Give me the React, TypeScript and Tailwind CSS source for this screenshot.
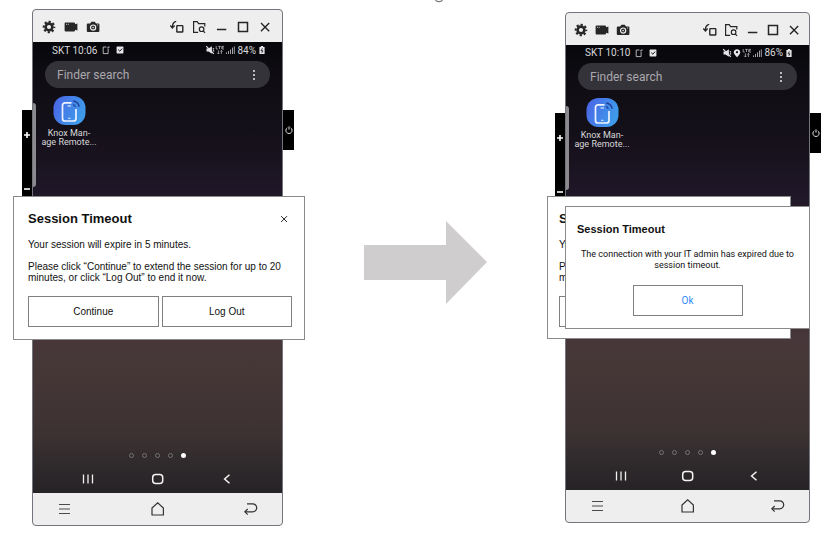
import type { ReactNode } from "react";

type IconProps = { className?: string };

const box = "h-3.5 w-3.5 shrink-0";

const GearIcon = () => (
  <svg viewBox="0 0 14 14" className={box} fill="none" stroke="#262626">
    <circle cx="7" cy="7" r="3.4" strokeWidth="2.6" />
    <circle cx="7" cy="7" r="5.3" strokeWidth="2" strokeDasharray="2.2 1.963" strokeDashoffset="1.1" />
  </svg>
);

const VideoIcon = () => (
  <svg viewBox="0 0 14 14" className={box} fill="#262626">
    <path d="M1.6 2.4h8.400a1 1 0 0 1 1 1v.8l2.400-.6v6.800L11 9.800v.8a1 1 0 0 1-1 1H1.600a1 1 0 0 1-1-1V3.400a1 1 0 0 1 1-1z" />
    <path d="M2 4.300h1M3.800 4.300h1" stroke="#eee" strokeWidth="0.800" />
  </svg>
);

const CameraIcon = () => (
  <svg viewBox="0 0 14 14" className={box}>
    <path d="M1.8 3.4h2.4l1.2-1.7h3.4L10 3.4h2.4a1 1 0 0 1 1 1v6.7a1 1 0 0 1-1 1H1.8a1 1 0 0 1-1-1V4.4a1 1 0 0 1 1-1z" fill="#262626" />
    <circle cx="7.1" cy="7.6" r="2.6" fill="#262626" stroke="#eee" strokeWidth="1.2" />
    <circle cx="7.1" cy="7.6" r="0.8" fill="#eee" />
    <path d="M11 5h1.2" stroke="#eee" strokeWidth="0.8" />
  </svg>
);

const RotateIcon = () => (
  <svg viewBox="0 0 14 14" className={box} fill="none" stroke="#262626" strokeWidth="1.4">
    <rect x="6.8" y="5.6" width="6" height="6.4" rx="0.6" />
    <path d="M6.2 1.4C3.8 2 2.4 3.6 2.4 7" />
    <path d="M0.3 5.4l2.1 2.5 2.2-2.3" />
  </svg>
);

const FolderSearchIcon = () => (
  <svg viewBox="0 0 14 14" className={box} fill="none" stroke="#262626" strokeWidth="1.2">
    <path d="M6.2 12.4H1.6V1.6h3.6l1.4 2h6.2v3" />
    <circle cx="9.6" cy="9.2" r="2.3" />
    <path d="M11.2 10.9l1.8 2" />
  </svg>
);

const MinimizeIcon = () => (
  <svg viewBox="0 0 14 14" className={box} stroke="#262626">
    <path d="M2.900 9.5h9.400" strokeWidth="1.3" />
  </svg>
);

const MaximizeIcon = () => (
  <svg viewBox="0 0 14 14" className={box} fill="none" stroke="#262626">
    <rect x="2.5" y="2.5" width="9" height="9" strokeWidth="1.5" />
  </svg>
);

const CloseIcon = ({ className = box }: IconProps) => (
  <svg viewBox="0 0 14 14" className={className} fill="none" stroke="#262626" strokeWidth="1.4">
    <path d="M3 3l8.2 8.2M11.2 3L3 11.2" />
  </svg>
);

const statusBox = "h-2.5 w-2.5 shrink-0";

const NoteIcon = () => (
  <svg viewBox="0 0 10 10" className={statusBox} fill="none" stroke="#c4c4c6" strokeWidth="0.9">
    <path d="M5.4 2H2.2v6.6h4.9V4" />
    <path d="M6 2.9h1.9V1.2" />
  </svg>
);

const CheckIcon = () => (
  <svg viewBox="0 0 10 10" className={statusBox}>
    <rect x="1.6" y="1.6" width="6.8" height="6.8" rx="0.6" fill="#e6e6e8" />
    <path d="M3.2 4.6l1.6 1.6 2.4-2.6" fill="none" stroke="#111" strokeWidth="1" />
  </svg>
);

const MuteIcon = () => (
  <svg viewBox="0 0 10 10" className={statusBox}>
    <path d="M1.500 3.600h2L6.900 1.200v7.600L3.500 6.600h-2z" fill="#e4e4e6" />
    <path d="M1.2 1.2l7.600 7.600M7.8 3.400l1.200.8M7.8 5.800h1.400" stroke="#e4e4e6" strokeWidth="1.200" />
  </svg>
);

const PinIcon = () => (
  <svg viewBox="0 0 10 10" className={statusBox}>
    <path d="M5 1.2c2 0 3.2 1.4 3.2 3S6.600 7.600 5 9.200C3.400 7.600 1.800 5.800 1.800 4.200S3 1.200 5 1.200z" fill="#e6e6e8" />
    <circle cx="5" cy="4.200" r="1.100" fill="#111" />
  </svg>
);

const LteIcon = () => (
  <svg viewBox="0 0 10 10" className={statusBox} fill="none" stroke="#b4b4b6" strokeWidth="0.8">
    <path d="M1.2 1v3h1.600M3.200 1.400h2.600M4.500 1.400V4M9 1.400H6.800V4H9M6.800 2.700h1.800" />
    <path d="M3.400 9V5.400M2.300 7.800L3.400 9l1.100-1.200M6.400 9V5.400M5.300 6.600l1.100-1.200 1.100 1.200" />
  </svg>
);

const SignalIcon = () => (
  <svg viewBox="0 0 10 10" className={statusBox} stroke="#a2a2a6" strokeWidth="1">
    <path d="M1.5 9V7.400M3.500 9V6M5.500 9V4.400M7.500 9V2.600M9.300 9V1.400" />
  </svg>
);

const BatteryIcon = () => (
  <svg viewBox="0 0 8 10" className="h-2.5 w-2 shrink-0">
    <path d="M2.800 1h2.400v1H6.600v7H1.400V2h1.400z" fill="#e6e6e8" />
    <path d="M4.400 3.400L3 5.800h2L3.800 7.800" fill="none" stroke="#222" strokeWidth="0.9" />
  </svg>
);

const AppIcon = () => (
  <svg viewBox="0 0 33 29" className="h-[29px] w-[33px]">
    <defs>
      <linearGradient id="tile" x1="0" y1="0" x2="1" y2="0.400">
        <stop offset="0" stopColor="#4a62e6" />
        <stop offset="1" stopColor="#3f9bea" />
      </linearGradient>
    </defs>
    <rect x="0.5" y="0" width="32" height="29" rx="12" fill="url(#tile)" />
    <path d="M18.500 6.800h-6.500a2.500 2.500 0 0 0-2.500 2.500v13.200a2.500 2.500 0 0 0 2.500 2.500h8.500a2.500 2.500 0 0 0 2.500-2.500V13" fill="none" stroke="#eef4ff" strokeWidth="1.700" />
    <path d="M14.500 10h3.500M15.200 22.300h2.200" stroke="#eef4ff" strokeWidth="1" />
    <path d="M20 8.600c1.300.3 2 1 2.300 2.300M20.200 5c3.200.4 5.400 2.400 6 5.800" fill="none" stroke="#1f3f94" strokeWidth="1.300" />
  </svg>
);

const RecentIcon = () => (
  <svg viewBox="0 0 14 14" className={box} stroke="#f0f0f0" strokeWidth="1.300">
    <path d="M2.500 2.500v9M7 2.500v9M11.500 2.500v9" />
  </svg>
);

const HomeSquareIcon = () => (
  <svg viewBox="0 0 14 14" className={box} fill="none" stroke="#f4f4f4" strokeWidth="1.500">
    <rect x="1.700" y="2.500" width="10" height="9" rx="3" />
  </svg>
);

const ChevronIcon = () => (
  <svg viewBox="0 0 14 14" className={box} fill="none" stroke="#f4f4f4" strokeWidth="1.500">
    <path d="M9.500 2.700L4.600 7l4.900 4.300" />
  </svg>
);

const MenuIcon = () => (
  <svg viewBox="0 0 14 14" className={box} stroke="#4a4a4a" strokeWidth="1.100">
    <path d="M2 2.500h11M2 7h11M2 11.500h11" />
  </svg>
);

const HouseIcon = () => (
  <svg viewBox="0 0 14 14" className={box} fill="none" stroke="#333" strokeWidth="1.200">
    <path d="M1 6L6.700.9 12.400 6v7H1z" />
  </svg>
);

const ReturnIcon = () => (
  <svg viewBox="0 0 14 14" className={box} fill="none" stroke="#333" strokeWidth="1.200">
    <path d="M3 1.800h5.700a4 4 0 0 1 0 8H1" />
    <path d="M3.700 7L.8 9.800l2.900 2.800" />
  </svg>
);

const PowerIcon = () => (
  <svg viewBox="0 0 8 8" className="h-2 w-2" fill="none" stroke="#e0e0e0" strokeWidth="1">
    <path d="M2.300 1.800a3.100 3.100 0 1 0 3.400 0M4 .4v3.200" />
  </svg>
);

const Sign = ({ plus }: { plus?: boolean }) => (
  <svg viewBox="0 0 6 6" className="h-1.5 w-1.5" stroke="#fff" strokeWidth="1.600">
    <path d={plus ? "M0 3h6M3 0v6" : "M0 3h6"} />
  </svg>
);

type PhoneProps = {
  time: string;
  battery: string;
  located?: boolean;
  barClass: string;
  toolGap: string;
  screenClass: string;
  statusClass: string;
  children: ReactNode;
};

function Phone({ time, battery, located, barClass, toolGap, screenClass, statusClass, children }: PhoneProps) {
  return (
    <section className="relative">
      <div className="absolute right-full top-[101px] flex h-24 w-2.5 flex-col items-center justify-between bg-black pb-[14px] pt-[22px]">
        <button aria-label="Volume up"><Sign plus /></button>
        <button aria-label="Volume down"><Sign /></button>
      </div>
      <button aria-label="Power" className="absolute left-full top-[101px] flex h-10 w-[11px] items-center justify-center bg-black">
        <PowerIcon />
      </button>

      <div className="overflow-hidden rounded-[4px] border border-[#74747c] bg-[#eee]">
        <header className={`flex h-8 items-center justify-between pt-[2px] ${barClass}`}>
          <div className={`flex ${toolGap}`}>
            <button aria-label="Settings"><GearIcon /></button>
            <button aria-label="Record"><VideoIcon /></button>
            <button aria-label="Capture"><CameraIcon /></button>
          </div>
          <div className={`flex ${toolGap}`}>
            <button aria-label="Rotate"><RotateIcon /></button>
            <button aria-label="Browse files"><FolderSearchIcon /></button>
            <button aria-label="Minimize"><MinimizeIcon /></button>
            <button aria-label="Maximize"><MaximizeIcon /></button>
            <button aria-label="Close window"><CloseIcon /></button>
          </div>
        </header>

        <div className={`relative flex flex-col bg-[linear-gradient(#07070b_0%,#0f0d13_8%,#141019_20%,#201728_34%,#47373a_66%,#463737_72%,#3d3232_87%,#302b2d_93%,#262326_100%)] font-[Roboto,sans-serif] ${screenClass}`}>
          <div className={`flex items-center justify-between pl-[19px] pr-4 text-[10px] text-[#d8d8da] ${statusClass}`}>
            <div className="flex items-center gap-1">
              <span>{time}</span>
              <NoteIcon />
              <CheckIcon />
            </div>
            <div className="flex items-center">
              <MuteIcon />
              {located && <PinIcon />}
              <LteIcon />
              <SignalIcon />
              <span className="ml-0.5 mr-0.5">{battery}</span>
              <BatteryIcon />
            </div>
          </div>

          <div className="mx-3 mt-[3px] flex h-[27px] items-center rounded-full bg-[#35333a] pl-3 pr-[13px]">
            <input
              aria-label="Finder search"
              placeholder="Finder search"
              className="min-w-0 flex-1 bg-transparent text-[12px] outline-none placeholder:text-[#a9a8ad]"
            />
            <button aria-label="More options" className="flex flex-col gap-[2px] p-0.5">
              <i className="h-0.5 w-0.5 rounded-full bg-[#e8e8e8]" />
              <i className="h-0.5 w-0.5 rounded-full bg-[#e8e8e8]" />
              <i className="h-0.5 w-0.5 rounded-full bg-[#e8e8e8]" />
            </button>
          </div>

          <button className="ml-2 mt-2 flex w-14 flex-col items-center gap-1 text-[9px] leading-[9px] text-[#d8d8da]">
            <AppIcon />
            <span className="whitespace-nowrap">Knox Man-<br />age Remote...</span>
          </button>

          <div className="absolute left-0 top-[61px] h-[84px] w-[3px] rounded-r-sm bg-[#8b8a8f]" />

          <div className="mt-auto flex h-5 items-center justify-center gap-2">
            <i className="h-[5px] w-[5px] rounded-full border border-[#747072]" />
            <i className="h-[5px] w-[5px] rounded-full border border-[#747072]" />
            <i className="h-[5px] w-[5px] rounded-full border border-[#747072]" />
            <i className="h-[5px] w-[5px] rounded-full border border-[#747072]" />
            <i className="h-[5px] w-[5px] rounded-full bg-white" />
          </div>
          <nav className="flex h-7 items-center justify-between px-12">
            <button aria-label="Recent apps"><RecentIcon /></button>
            <button aria-label="Home"><HomeSquareIcon /></button>
            <button aria-label="Back"><ChevronIcon /></button>
          </nav>
        </div>

        <footer className="flex h-8 items-center justify-between px-6">
          <button aria-label="Menu"><MenuIcon /></button>
          <button aria-label="Device home"><HouseIcon /></button>
          <button aria-label="Device back"><ReturnIcon /></button>
        </footer>
      </div>
      {children}
    </section>
  );
}

const outline = "flex-1 border border-[#808080] text-center";

function TimeoutDialog({ className, titleClass }: { className: string; titleClass: string }) {
  return (
    <div role="dialog" aria-label="Session expiry" className={`absolute overflow-hidden border border-[#8a8a8a] bg-white pt-3.5 ${className}`}>
      <div className="flex items-center justify-between">
        <h2 className={`font-bold leading-4 ${titleClass}`}>Session Timeout</h2>
        <button aria-label="Close"><CloseIcon className="mr-[3px] h-2.5 w-2.5" /></button>
      </div>
      <div className="mt-3 flex flex-col gap-[11px] whitespace-nowrap text-[10px] leading-[11px]">
        <p>Your session will expire in 5 minutes.</p>
        <p>
          Please click “Continue” to extend the session for up to 20
          <br />
          minutes, or click “Log Out” to end it now.
        </p>
      </div>
      <div className="mt-[13px] flex h-[31px] gap-[3px] text-[10px]">
        <button className={outline}>Continue</button>
        <button className={outline}>Log Out</button>
      </div>
    </div>
  );
}

export default function App() {
  return (
    <main className="relative grid grid-cols-[251fr_282fr_245fr] items-start bg-white pl-8 pr-[22px] pt-[9px] font-['Liberation_Sans',Arial,sans-serif] text-[#111]">
      <svg viewBox="0 0 8 3" className="absolute left-[calc(50%+19px)] top-0 h-[3px] w-2" fill="none" stroke="#777" strokeWidth="1.200">
        <path d="M0.500 0C1.500 2.200 6.500 2.200 7.500 0" />
      </svg>

      <Phone
        time="SKT 10:06"
        battery="84%"
        barClass="pl-[9px] pr-2.5"
        toolGap="gap-2"
        screenClass="h-[451px]"
        statusClass="h-4"
      >
        <TimeoutDialog
          className="-left-[19px] -right-[22px] top-[187px] h-36 pl-3.5 pr-3"
          titleClass="text-[13px]"
        />
      </Phone>

      <svg viewBox="0 0 124 84" className="ml-1 mt-[212px] h-[84px] w-[124px] justify-self-center" fill="#cfcdce">
        <path d="M0 24h82V0l41 41-41 42V59H0z" />
      </svg>

      <div className="pt-[3px]">
        <Phone
          time="SKT 10:10"
          battery="86%"
          located
          barClass="pl-2 pr-2"
          toolGap="gap-[7px]"
          screenClass="h-[445px]"
          statusClass="h-[15px]"
        >
          <TimeoutDialog
            className="-left-[18px] right-[19px] top-[184px] h-[143px] px-[11px]"
            titleClass="text-[13px]"
          />
          <div role="dialog" aria-label="Session expired" className="absolute inset-x-0 top-[194px] border border-[#8a8a8a] bg-white px-[11px] pb-3 pt-3.5">
            <h2 className="text-[11px] font-bold leading-4">Session Timeout</h2>
            <p className="mt-3 text-center font-[Roboto,sans-serif] text-[9px] leading-[11px]">
              The connection with your IT admin has expired due to session timeout.
            </p>
            <button className="mx-auto mt-3.5 block h-[31px] w-[110px] border border-[#808080] font-[Roboto,sans-serif] text-[10px] text-[#2f8bf5]">Ok</button>
          </div>
        </Phone>
      </div>
    </main>
  );
}
